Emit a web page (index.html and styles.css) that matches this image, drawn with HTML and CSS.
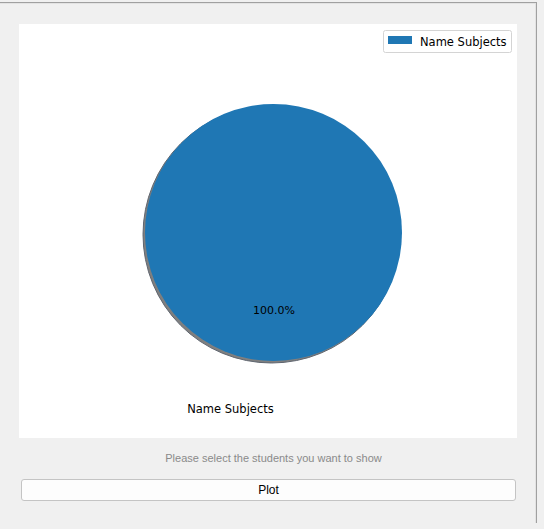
FILE: index.html
```html
<!DOCTYPE html>
<html>
<head>
<meta charset="utf-8">
<link rel="stylesheet" href="styles.css">
</head>
<body>
<div class="frame">
  <div class="canvas">
    <svg class="plot" width="498" height="414" viewBox="0 0 498 414">
      <rect x="0" y="0" width="498" height="414" fill="#ffffff"/>
      <circle cx="252.5" cy="210.5" r="128.5" fill="#7f7f7f" stroke="#5f6670" stroke-width="1"/>
      <circle cx="254.5" cy="208.5" r="128.5" fill="#1f77b4"/>
      <text x="255" y="290" class="pct" text-anchor="middle">100.0%</text>
      <text x="211.5" y="389" class="lbl" text-anchor="middle">Name Subjects</text>
      <rect x="364.5" y="6.5" width="128" height="22" rx="2" fill="#ffffff" stroke="#d4d4d4"/>
      <rect x="369" y="12" width="24" height="8" fill="#1f77b4"/>
      <text x="401" y="22" class="lbl">Name Subjects</text>
    </svg>
  </div>
  <div class="hint">Please select the students you want to show</div>
  <button class="btn">Plot</button>
</div>
</body>
</html>
```
FILE: styles.css
```css
html, body {
  margin: 0;
  padding: 0;
  background: #f0f0f0;
  height: 100%;
  overflow: hidden;
}
.frame {
  margin-top: 2px;
  width: 517px;
  height: 520px;
  border-top: 1px solid #a0a0a0;
  border-right: 1px solid #a0a0a0;
  box-shadow: inset 0 1px 0 #e3e3e3, inset -1px 0 0 #e3e3e3;
  display: flex;
  flex-direction: column;
  padding-left: 19px;
  box-sizing: content-box;
}
.canvas {
  margin-top: 21px;
  width: 498px;
  height: 414px;
  background: #fff;
}
.plot {
  display: block;
}
.pct {
  font-family: "DejaVu Sans", sans-serif;
  font-size: 11px;
  fill: #000;
}
.lbl {
  font-family: "DejaVu Sans", sans-serif;
  font-size: 11.5px;
  fill: #000;
}
.hint {
  width: 509px;
  margin-top: 13px;
  text-align: center;
  font-family: "Liberation Sans", Arial, sans-serif;
  font-size: 11px;
  color: #8a8a8a;
  line-height: 14px;
}
.btn {
  margin-top: 14px;
  margin-left: 2px;
  width: 495px;
  height: 22px;
  background: #fdfdfd;
  border: 1px solid #c4c4c4;
  border-radius: 3px;
  font-family: "Liberation Sans", Arial, sans-serif;
  font-size: 12px;
  color: #000;
  padding: 0;
}
```
